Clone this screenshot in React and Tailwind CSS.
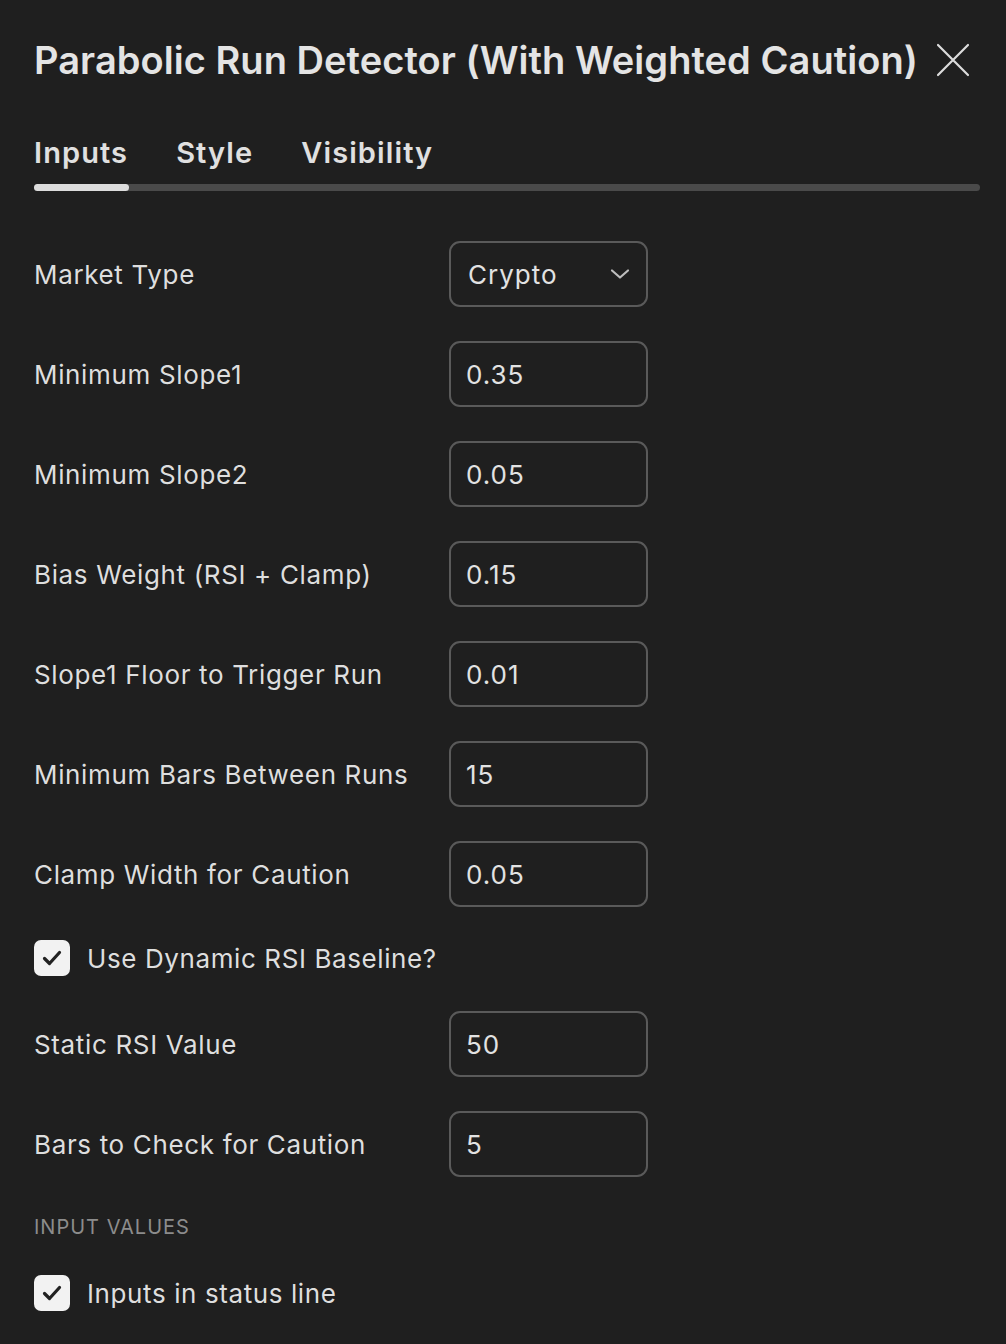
import React from "react";

function Check() {
  return (
    <div className="w-[36px] h-[36px] rounded-[7px] bg-[#f2f2f2] flex items-center justify-center shrink-0">
      <svg width="36" height="36" viewBox="0 0 36 36" fill="none">
        <path d="M10.5 18.5 L15.5 23.5 L25.5 12.5" stroke="#222222" strokeWidth="3.2" strokeLinecap="round" strokeLinejoin="round" />
      </svg>
    </div>
  );
}

function Row({ label, value, select, className = "" }) {
  return (
    <div className={"flex items-center h-[66px] " + className}>
      <div className="w-[415px] text-[26px] text-[#dedede] tracking-[0.65px]">{label}</div>
      <div className="w-[199px] h-[66px] rounded-[11px] border-2 border-[#5a5a5a] flex items-center pl-[15px] pr-[14px] text-[26px] text-[#e2e2e2] tracking-[1px] justify-between">
        <span className={select ? "pl-[2px]" : ""}>{value}</span>
        {select && (
          <svg width="22" height="14" viewBox="0 0 22 14" fill="none" className="mr-[1px]">
            <path d="M3 3.5 L11 10.5 L19 3.5" stroke="#bdbdbd" strokeWidth="2.2" strokeLinecap="round" strokeLinejoin="round" />
          </svg>
        )}
      </div>
    </div>
  );
}

export default function App() {
  return (
    <div
      className="w-[1006px] h-[1344px] bg-[#1f1f1f] overflow-hidden"
      style={{ fontFamily: "Inter, 'Noto Sans', sans-serif" }}
    >
      <div className="pl-[34px] pr-[26px]">
        <div className="flex items-center justify-between pt-[37px] h-[83px]">
          <div className="text-[38px] font-semibold text-[#e4e4e4] leading-[46px] tracking-[0.05px]">
            Parabolic Run Detector (With Weighted Caution)
          </div>
          <svg width="34" height="34" viewBox="0 0 34 34" fill="none" className="mr-[10px]">
            <path d="M2 2 L32 32 M32 2 L2 32" stroke="#dcdcdc" strokeWidth="2.2" strokeLinecap="round" />
          </svg>
        </div>

        <div className="flex gap-[48px] mt-[52px] h-[36px] items-center text-[29px] font-semibold text-[#e0e0e0] leading-[36px] tracking-[1.1px]">
          <span>Inputs</span>
          <span>Style</span>
          <span>Visibility</span>
        </div>
        <div className="mt-[13px] h-[7px] w-[946px] rounded-full bg-[#4a4a4a] flex">
          <div className="w-[95px] h-[7px] rounded-full bg-[#dcdcdc]" />
        </div>

        <div className="mt-[50px] flex flex-col gap-[34px]">
          <Row label="Market Type" value="Crypto" select />
          <Row label="Minimum Slope1" value="0.35" />
          <Row label="Minimum Slope2" value="0.05" />
          <Row label="Bias Weight (RSI + Clamp)" value="0.15" />
          <Row label="Slope1 Floor to Trigger Run" value="0.01" />
          <Row label="Minimum Bars Between Runs" value="15" />
          <Row label="Clamp Width for Caution" value="0.05" />
        </div>

        <div className="mt-[33px] flex items-center gap-[17px] h-[36px]">
          <Check />
          <span className="text-[26px] text-[#dedede] tracking-[0.6px]">Use Dynamic RSI Baseline?</span>
        </div>

        <div className="mt-[35px] flex flex-col gap-[34px]">
          <Row label="Static RSI Value" value="50" />
          <Row label="Bars to Check for Caution" value="5" />
        </div>

        <div className="mt-[38px] text-[20px] text-[#8c8c8c] leading-[24px] tracking-[1px]">INPUT VALUES</div>

        <div className="mt-[36px] flex items-center gap-[17px] h-[36px]">
          <Check />
          <span className="text-[26px] text-[#dedede] tracking-[0.6px]">Inputs in status line</span>
        </div>
      </div>
    </div>
  );
}
